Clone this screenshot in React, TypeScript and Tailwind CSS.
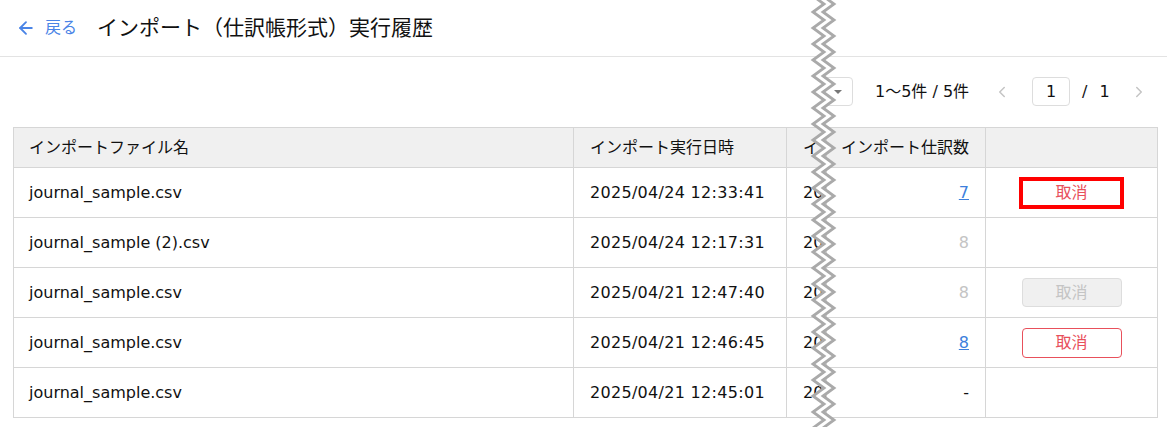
import { ArrowLeft, ChevronLeft, ChevronRight } from "lucide-react";

type Row = {
  file: string;
  executed: string;
  other: string;
  count: string;
  countStyle: "link" | "muted" | "plain";
  action: "highlight" | "disabled" | "outline" | "none";
};

const rows: Row[] = [
  { file: "journal_sample.csv", executed: "2025/04/24 12:33:41", other: "2025/04/24", count: "7", countStyle: "link", action: "highlight" },
  { file: "journal_sample (2).csv", executed: "2025/04/24 12:17:31", other: "2025/04/24", count: "8", countStyle: "muted", action: "none" },
  { file: "journal_sample.csv", executed: "2025/04/21 12:47:40", other: "2025/04/21", count: "8", countStyle: "muted", action: "disabled" },
  { file: "journal_sample.csv", executed: "2025/04/21 12:46:45", other: "2025/04/21", count: "8", countStyle: "link", action: "outline" },
  { file: "journal_sample.csv", executed: "2025/04/21 12:45:01", other: "2025/04/21", count: "-", countStyle: "plain", action: "none" },
];

// torn-edge zigzag drawn over the cut in the screenshot
function TornEdge() {
  const h = 440;
  const step = 8;
  const left: [number, number][] = [];
  for (let y = -4, i = 0; y <= h; y += step, i++) {
    left.push([i % 2 === 0 ? 3 : 14, y]);
  }
  const right = left.map(([x, y]) => [x + 10, y] as [number, number]);
  const band = [...left, ...right.slice().reverse()].map(([x, y]) => `${x},${y}`).join(" ");
  const line = (pts: [number, number][]) => pts.map(([x, y]) => `${x},${y}`).join(" ");
  return (
    <svg className="pointer-events-none absolute left-[810px] top-0" width="28" height="427" viewBox="0 0 28 427">
      <polygon points={band} fill="#ffffff" />
      <polyline points={line(left)} fill="none" stroke="#aaaaaa" strokeWidth="2.8" />
      <polyline points={line(right)} fill="none" stroke="#aaaaaa" strokeWidth="2.8" />
    </svg>
  );
}

function ActionCell({ action }: { action: Row["action"] }) {
  if (action === "highlight")
    return (
      <button className="mx-auto flex h-[32px] w-[105px] items-center justify-center border-4 border-[#ff0000] bg-white text-[16px] text-[#e8505b]">
        取消
      </button>
    );
  if (action === "disabled")
    return (
      <button className="mx-auto flex h-[29px] w-[100px] items-center justify-center rounded-[4px] border border-[#dddddd] bg-[#f0f0f0] text-[16px] text-[#c4c4c4]">
        取消
      </button>
    );
  if (action === "outline")
    return (
      <button className="mx-auto flex h-[30px] w-[100px] items-center justify-center rounded-[4px] border border-[#e8505b] bg-white text-[16px] text-[#e8505b]">
        取消
      </button>
    );
  return null;
}

export default function App() {
  return (
    <div className="relative h-[427px] w-[1167px] overflow-hidden bg-white font-['DejaVu_Sans','Noto_Sans_CJK_JP',sans-serif] text-[#111]">
      {/* header */}
      <header className="flex h-[57px] items-center border-b border-[#e3e3e3] pl-[16px]">
        <button className="flex items-center text-[#4a84e6]">
          <ArrowLeft className="h-[20px] w-[20px]" strokeWidth={2.2} />
          <span className="ml-[9px] text-[16px]">戻る</span>
        </button>
        <h1 className="ml-[20px] text-[21px] leading-none text-[#111]">インポート（仕訳帳形式）実行履歴</h1>
      </header>

      {/* pagination */}
      <div className="mt-[20px] flex h-[29px] items-center">
        <div className="ml-[822px] flex h-[29px] w-[31px] items-center justify-end rounded-r-[4px] border border-[#dddddd] pr-[10px]">
          <span className="h-0 w-0 border-x-[4px] border-t-[4px] border-x-transparent border-t-[#777777]" />
        </div>
        <span className="ml-[22px] text-[16px]">1〜5件 / 5件</span>
        <button className="ml-[22px] flex h-[29px] w-[22px] items-center justify-center text-[#c4c4c4]">
          <ChevronLeft className="h-[18px] w-[18px]" strokeWidth={2} />
        </button>
        <div className="ml-[19px] flex h-[29px] w-[38px] items-center justify-center rounded-[4px] border border-[#dddddd] text-[16px]">
          1
        </div>
        <span className="ml-[12px] text-[16px]">/</span>
        <span className="ml-[12px] text-[16px]">1</span>
        <button className="ml-[18px] flex h-[29px] w-[22px] items-center justify-center text-[#c4c4c4]">
          <ChevronRight className="h-[18px] w-[18px]" strokeWidth={2} />
        </button>
      </div>

      {/* table */}
      <div className="mt-[21px] pl-[13px] pr-[10px]">
        <table className="w-[1144px] table-fixed border-collapse text-[16px]">
          <colgroup>
            <col className="w-[560px]" />
            <col className="w-[213px]" />
            <col className="w-[40px]" />
            <col className="w-[159px]" />
            <col className="w-[172px]" />
          </colgroup>
          <thead>
            <tr className="h-[40px] bg-[#f0f0f0]">
              <th className="border border-[#d6d6d6] pl-[15px] text-left font-normal">インポートファイル名</th>
              <th className="border border-[#d6d6d6] pl-[16px] text-left font-normal">インポート実行日時</th>
              <th className="overflow-hidden whitespace-nowrap border border-[#d6d6d6] pl-[16px] text-left font-normal">インポート元</th>
              <th className="border border-[#d6d6d6] pr-[16px] text-right font-normal">インポート仕訳数</th>
              <th className="border border-[#d6d6d6]" />
            </tr>
          </thead>
          <tbody>
            {rows.map((r, i) => (
              <tr key={i} className="h-[50px]">
                <td className="border border-[#d6d6d6] pl-[15px]">{r.file}</td>
                <td className="whitespace-nowrap border border-[#d6d6d6] pl-[16px] tracking-[0.3px]">{r.executed}</td>
                <td className="overflow-hidden whitespace-nowrap border border-[#d6d6d6] pl-[16px]">{r.other}</td>
                <td className="border border-[#d6d6d6] pr-[16px] text-right">
                  {r.countStyle === "link" && <a className="text-[#3d7fdc] underline">{r.count}</a>}
                  {r.countStyle === "muted" && <span className="text-[#c4c4c4]">{r.count}</span>}
                  {r.countStyle === "plain" && <span>{r.count}</span>}
                </td>
                <td className="border border-[#d6d6d6]">
                  <ActionCell action={r.action} />
                </td>
              </tr>
            ))}
          </tbody>
        </table>
      </div>

      <TornEdge />
    </div>
  );
}
